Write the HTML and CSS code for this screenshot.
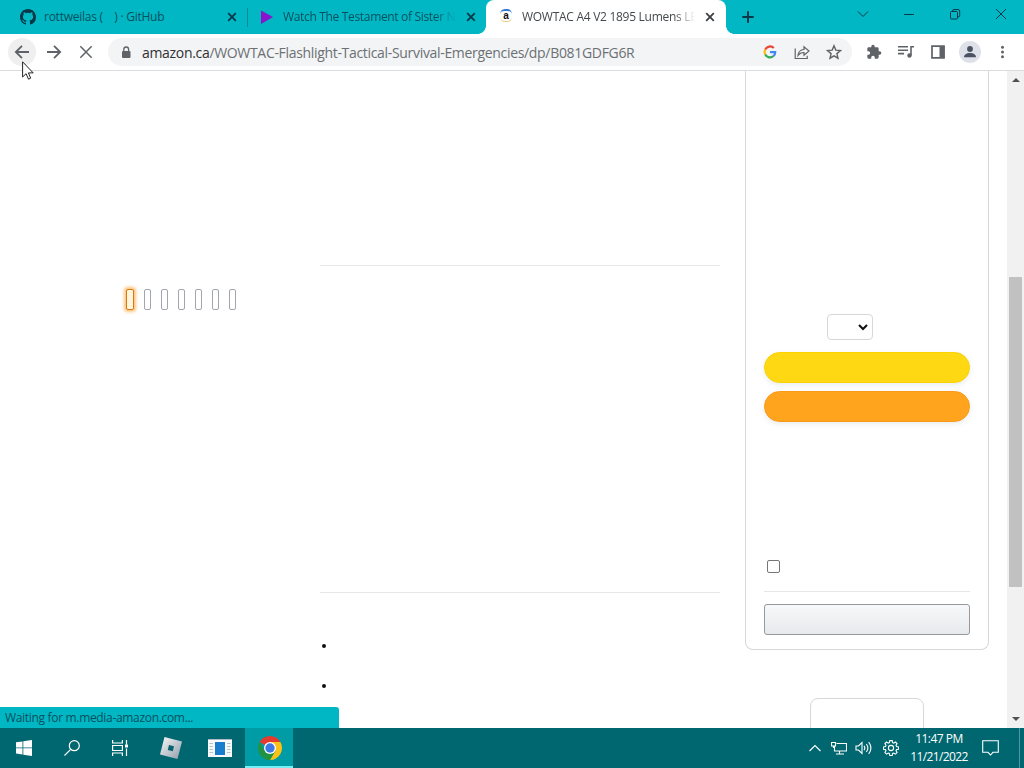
FILE: index.html
```
<!DOCTYPE html>
<html lang="en">
<head>
  <meta charset="UTF-8">
  <title>WOWTAC A4 V2 1895 Lumens LED Flashlight</title>
  <link rel="stylesheet" href="styles.css">
</head>
<body>

<div class="tab-bar">
  <div class="tab first-tab">
    <svg class="favicon" viewBox="0 0 16 16"><path fill="#07384a" d="M8 0C3.58 0 0 3.58 0 8c0 3.54 2.29 6.53 5.47 7.59.4.07.55-.17.55-.38 0-.19-.01-.82-.01-1.49-2.01.37-2.53-.49-2.69-.94-.09-.23-.48-.94-.82-1.13-.28-.15-.68-.52-.01-.53.63-.01 1.08.58 1.23.82.72 1.21 1.87.87 2.33.66.07-.52.28-.87.51-1.07-1.78-.2-3.64-.89-3.64-3.95 0-.87.31-1.59.82-2.15-.08-.2-.36-1.02.08-2.12 0 0 .67-.21 2.2.82a7.6 7.6 0 0 1 4 0c1.53-1.04 2.2-.82 2.2-.82.44 1.1.16 1.92.08 2.12.51.56.82 1.27.82 2.15 0 3.07-1.87 3.75-3.65 3.95.29.25.54.73.54 1.48 0 1.07-.01 1.93-.01 2.2 0 .21.15.46.55.38A8.01 8.01 0 0 0 16 8c0-4.42-3.58-8-8-8z"/></svg>
    <span class="title github-title">rottweilas (&nbsp;&nbsp;&nbsp; ) · GitHub</span>
    <svg class="close" viewBox="0 0 10 10"><path d="M1.2 1.2l7.6 7.6M8.8 1.2L1.2 8.8"/></svg>
  </div>
  <div class="tab second-tab">
    <svg class="favicon" viewBox="0 0 16 16"><path fill="#8a14cc" d="M2 1.5L14 8 2 15z"/></svg>
    <span class="title fade watch-title">Watch The Testament of Sister N</span>
    <svg class="close" viewBox="0 0 10 10"><path d="M1.2 1.2l7.6 7.6M8.8 1.2L1.2 8.8"/></svg>
  </div>
  <div class="tab active">
    <div class="favicon amazon-icon">a</div>
    <span class="title fade wowtac-title">WOWTAC A4 V2 1895 Lumens LE</span>
    <svg class="close" viewBox="0 0 10 10"><path d="M1.2 1.2l7.6 7.6M8.8 1.2L1.2 8.8"/></svg>
  </div>
  <svg class="new-tab" viewBox="0 0 12 12"><path d="M6 .3v11.4M.3 6h11.4"/></svg>
  <div class="window-buttons">
    <svg viewBox="0 0 12 12"><path d="M1 3.5l5 5 5-5"/></svg>
    <svg viewBox="0 0 12 12"><path d="M1 6.5h10"/></svg>
    <svg viewBox="0 0 12 12"><rect x="1.5" y="3.5" width="7" height="7.5" rx="1"/><path d="M3.5 3.2V3a1.6 1.6 0 0 1 1.6-1.5H9A1.7 1.7 0 0 1 10.7 3v4.3A1.6 1.6 0 0 1 9 9"/></svg>
    <svg viewBox="0 0 12 12"><path d="M1 1l10 10M11 1L1 11"/></svg>
  </div>
</div>

<div class="toolbar">
  <div class="nav-button hovered"><svg viewBox="0 0 16 16"><path d="M15 8H2M8 1.8L1.8 8 8 14.2"/></svg></div>
  <div class="nav-button"><svg viewBox="0 0 16 16"><path d="M1 8h13M8 1.8L14.2 8 8 14.2"/></svg></div>
  <div class="nav-button"><svg viewBox="0 0 16 16"><path d="M2.3 2.3l11.4 11.4M13.7 2.3L2.3 13.7" stroke-width="1.5"/></svg></div>
  <div class="omnibox">
    <svg class="lock" viewBox="0 0 10 13"><rect x="1" y="5" width="8.5" height="7" rx="1" fill="#5f6368"/><path d="M2.8 5.5V3.4a2.4 2.4 0 0 1 4.8 0v2.1" fill="none" stroke="#5f6368" stroke-width="1.3"/></svg>
    <span class="url"><b>amazon.ca</b>/WOWTAC-Flashlight-Tactical-Survival-Emergencies/dp/B081GDFG6R</span>
    <svg class="box-icon" viewBox="0 0 16 16" fill="none"><g stroke-width="2.2"><path stroke="#ea4335" d="M3.2 5.5a5.3 5.3 0 0 1 8.6-1.4"/><path stroke="#fbbc05" d="M3.2 5.5a5.3 5.3 0 0 0 0 5"/><path stroke="#34a853" d="M3.2 10.5a5.3 5.3 0 0 0 8.3 1.5"/><path stroke="#4285f4" d="M8 8.2h5.2a5.1 5.1 0 0 1-1.7 3.8"/></g></svg>
    <svg class="box-icon share" viewBox="0 0 16 16"><path d="M1.2 4.5v10h12v-2.7M4 11.5c.3-4 2.4-5.7 6-6V2.8L15 7l-5 4.2V8.5c-2.7 0-4.5.8-6 3z"/></svg>
    <svg class="box-icon" viewBox="0 0 16 16"><path d="M8 1.8l1.8 4.3 4.7.4-3.6 3.1 1.1 4.6L8 11.8l-4 2.4 1.1-4.6-3.6-3.1 4.7-.4z"/></svg>
  </div>
  <div class="extensions">
    <svg viewBox="0 0 24 24"><path fill="#5f6368" d="M20.5 11H19V7c0-1.100-.9-2-2-2h-4V3.500a2.500 2.500 0 0 0-5 0V5H4c-1.100 0-2 .9-2 2v3.800h1.500a2.700 2.700 0 0 1 0 5.400H2V20c0 1.100.9 2 2 2h3.800v-1.500a2.700 2.700 0 0 1 5.400 0V22H17c1.100 0 2-.9 2-2v-4h1.500a2.500 2.500 0 0 0 0-5z"/></svg>
    <svg viewBox="0 0 16 16"><path d="M0 2.8h10M0 6.2h10M0 9.6h6M16 2.8h-3v8.5" fill="none" stroke="#5f6368" stroke-width="1.6"/><circle cx="11.5" cy="11.5" r="2.2" fill="#5f6368"/></svg>
    <svg viewBox="0 0 16 16"><path d="M2 2.2h12v11.6H2z" fill="none" stroke="#5f6368" stroke-width="1.7"/><path d="M9.5 2h5v12h-5z" fill="#5f6368"/></svg>
    <div class="avatar"><svg viewBox="0 0 16 16" fill="#4b5263"><circle cx="8" cy="5" r="2.9"/><path d="M2 13.2c0-5.6 12-5.6 12 0z"/></svg></div>
    <svg viewBox="0 0 16 16" fill="#5f6368"><circle cx="8.5" cy="3.2" r="1.5"/><circle cx="8.5" cy="8" r="1.5"/><circle cx="8.5" cy="12.8" r="1.5"/></svg>
  </div>
</div>

<div class="viewport">
  <div class="product">
    <div class="thumbs">
      <div class="thumb selected"></div>
      <div class="thumb"></div>
      <div class="thumb"></div>
      <div class="thumb"></div>
      <div class="thumb"></div>
      <div class="thumb"></div>
      <div class="thumb"></div>
    </div>
    <div class="details">
      <hr>
      <hr>
      <ul>
        <li></li>
        <li></li>
      </ul>
    </div>
    <div class="side">
      <div class="buy-box">
        <div class="quantity"><svg viewBox="0 0 10 8"><path d="M1 2l4 4 4-4"/></svg></div>
        <div class="add-to-cart"></div>
        <div class="buy-now"></div>
        <div class="checkbox"></div>
        <hr>
        <div class="add-to-list"></div>
      </div>
      <div class="sell-box"></div>
    </div>
  </div>
  <div class="scrollbar">
    <svg viewBox="0 0 8 4"><path d="M0 4l4-4 4 4z"/></svg>
    <div class="scroll-thumb"></div>
    <svg viewBox="0 0 8 4"><path d="M0 0l4 4 4-4z"/></svg>
  </div>
  <div class="status"><span>Waiting for m.media-amazon.com...</span></div>
</div>

<div class="taskbar">
  <div class="task"><svg viewBox="0 0 16 16" fill="#fff"><path d="M0 2.3l6.5-.9v6.1H0zM7.3 1.3L16 0v7.5H7.3zM0 8.3h6.5v6.2L0 13.6zM7.3 8.3H16V16l-8.700-1.300z"/></svg></div>
  <div class="task"><svg viewBox="0 0 16 16" class="line"><circle cx="10.3" cy="5.7" r="5"/><path d="M6.7 9.3L.5 15.5"/></svg></div>
  <div class="task"><svg viewBox="0 0 16 16" class="line"><path d="M.6 0v3h9.8V0M.6 16v-3h9.8v3M.6 5.5h9.8v5H.6zM14.5 0v4.5M14.5 8.5V16"/><path d="M13 4.5h3v3h-3z" fill="#fff" stroke="none"/></svg></div>
  <div class="task">
    <svg class="roblox" viewBox="0 0 24 24"><defs><linearGradient id="silver" x2="1" y2="1"><stop offset="0" stop-color="#fafafa"/><stop offset="1" stop-color="#8f9ba8"/></linearGradient></defs><path fill="url(#silver)" d="M5.5 1L23 5.5 18.5 23 1 18.5z"/><path fill="#07646e" d="M10 9l5 1.2-1.2 5-5-1.2z"/></svg>
  </div>
  <div class="task">
    <svg class="run-app" viewBox="0 0 24 18"><path fill="#f7f9fa" d="M0 0h24v18H0z"/><path fill="#aebdc4" d="M0 0h24v1H0z"/><path fill="#177dcc" d="M7 3h10v13H7z"/><path stroke="#b5c3c7" d="M1.5 4.5H5M1.5 7.5H5M1.5 10.5H5M1.5 13.5H5M19 4.5h3.5M19 7.5h3.5M19 10.5h3.5M19 13.5h3.5"/></svg>
  </div>
  <div class="task running">
    <svg class="chrome" viewBox="0 0 24 24"><path fill="#e33b2e" d="M12 12L1.61 6a12 12 0 0 1 20.78 0z"/><path fill="#fbc116" d="M12 12V6h10.39A12 12 0 0 1 12 24l5.2-9z"/><path fill="#229342" d="M12 12l5.2 3L12 24A12 12 0 0 1 1.61 6L6.8 15z"/><circle cx="12" cy="12" r="6" fill="#fff"/><circle cx="12" cy="12" r="4.7" fill="#3c78e6"/></svg>
  </div>
  <div class="tray">
    <svg class="caret" viewBox="0 0 12 8"><path d="M.5 7L6 1.5 11.5 7"/></svg>
    <svg class="network" viewBox="0 0 16 14"><path d="M5.5 2.5h10V10h-12V5.5M8.5 10v3M5 13h8M.5 1.5h4V5h-4zM2.5 5v2"/></svg>
    <svg class="volume" viewBox="0 0 17 14"><path d="M1 5h2.5L7 1.5v11L3.5 9H1zM9 4.8c1 1.3 1 3.1 0 4.4M11.3 3c1.9 2.4 1.9 5.6 0 8M13.7 1.2c2.7 3.5 2.7 8.1 0 11.6"/></svg>
    <svg class="gear" viewBox="0 0 16 16"><path d="M6.8.6h2.4l.4 2 1.2.5L12.5 2l1.6 1.6-1.1 1.7.5 1.2 2 .4v2.3l-2 .4-.5 1.2 1.1 1.7-1.6 1.6-1.7-1.1-1.2.5-.4 2H6.8l-.4-2-1.2-.5-1.7 1.1-1.6-1.6L3 10.8l-.5-1.200-2-.4V6.900l2-.4L3 5.300 1.900 3.600 3.500 2l1.700 1.100 1.200-.5z"/><circle cx="8" cy="8" r="2.6"/></svg>
    <div class="clock"><span class="time">11:47 PM</span><span class="date">11/21/2022</span></div>
    <svg class="notes" viewBox="0 0 17 16"><path d="M.7.7h15.6v11.6H11L8.5 15 6 12.3H.7z"/></svg>
    <div class="show-desktop"></div>
  </div>
</div>

<svg class="cursor" viewBox="0 0 12 19"><path d="M.6.8V16l3.5-3.3 2.4 5.5 2.2-1-2.300-5.300h4.800z"/></svg>

</body>
</html>
```
FILE: styles.css
```
* { box-sizing: border-box; }
body {
  margin: 0;
  width: 1024px;
  height: 768px;
  overflow: hidden;
  background: #fff;
  font-family: "Open Sans", "Noto Sans", sans-serif;
  font-size: 12px;
}
svg {
  display: block;
  flex-shrink: 0;
}
hr {
  margin: 0;
  border: 0;
  border-top: 1px solid #e7e7e7;
}

/* tabs */
.tab-bar {
  display: flex;
  height: 34px;
  background: #00b7c3;
}
.tab {
  display: flex;
  align-items: center;
  height: 34px;
  color: #07505f;
}
.first-tab {
  position: relative;
  width: 248px;
  padding: 0 11px 0 20px;
}
.first-tab::after {
  content: "";
  position: absolute;
  right: 0;
  top: 8px;
  width: 1px;
  height: 19px;
  background: #078b97;
}
.second-tab {
  width: 238px;
  padding: 0 10px 0 11px;
}
.tab.active {
  position: relative;
  width: 240px;
  padding: 0 11px 0 14px;
  background: #fff;
  border-radius: 8px 8px 0 0;
  color: #45494d;
}
.tab.active::before,
.tab.active::after {
  content: "";
  position: absolute;
  bottom: 0;
  width: 8px;
  height: 8px;
}
.tab.active::before {
  left: -8px;
  background: radial-gradient(circle at 0 0, transparent 7.5px, #fff 8px);
}
.tab.active::after {
  right: -8px;
  background: radial-gradient(circle at 100% 0, transparent 7.5px, #fff 8px);
}
.favicon {
  width: 16px;
  height: 16px;
  margin-right: 8px;
}
.amazon-icon {
  width: 12px;
  height: 13px;
  margin-right: 10px;
  margin-bottom: 3px;
  border-top: 2px solid #3478d4;
  border-bottom: 1px solid #f0c987;
  border-radius: 40%;
  color: #111;
  font: bold 10px/9px "Liberation Sans", sans-serif;
  text-align: center;
}
.title {
  flex: 1;
  min-width: 0;
  margin-right: 10px;
  white-space: nowrap;
  line-height: 18px;
}
.github-title { letter-spacing: -0.25px; }
.watch-title { letter-spacing: -0.33px; }
.wowtac-title { letter-spacing: -0.28px; }
.fade {
  -webkit-mask-image: linear-gradient(to right, #000 88%, transparent);
  mask-image: linear-gradient(to right, #000 88%, transparent);
}
.close {
  width: 10px;
  height: 10px;
  fill: none;
  stroke: #07384a;
  stroke-width: 1.8;
}
.active .close { stroke: #3c4043; }
.new-tab {
  width: 12px;
  height: 12px;
  margin: 11px 0 0 16px;
  stroke: #07384a;
  stroke-width: 2;
}
.window-buttons {
  display: flex;
  gap: 34px;
  margin: 8px 17px 0 auto;
}
.window-buttons svg {
  width: 12px;
  height: 12px;
  fill: none;
  stroke: #07384a;
  stroke-width: 1;
}

/* toolbar */
.toolbar {
  display: flex;
  align-items: center;
  height: 37px;
  padding: 0 0 0 8px;
  border-bottom: 1px solid #dadce0;
  background: #fff;
}
.nav-button {
  display: flex;
  align-items: center;
  justify-content: center;
  width: 28px;
  height: 28px;
  margin-right: 4px;
  border-radius: 50%;
}
.nav-button.hovered { background: #efeff0; }
.nav-button svg {
  width: 16px;
  height: 16px;
  fill: none;
  stroke: #5f6368;
  stroke-width: 1.8;
}
.omnibox {
  display: flex;
  align-items: center;
  width: 744px;
  height: 28px;
  margin-left: 4px;
  padding: 0 10px 0 13px;
  border-radius: 14px;
  background: #f3f4f5;
}
.lock {
  width: 10px;
  height: 13px;
  margin-right: 11px;
}
.url {
  flex: 1;
  color: #6c7074;
  font-size: 14px;
  letter-spacing: -0.32px;
  white-space: nowrap;
}
.url b {
  color: #303134;
  font-weight: normal;
}
.box-icon {
  width: 16px;
  height: 16px;
  margin-left: 16px;
  fill: none;
  stroke: #5f6368;
  stroke-width: 1.4;
}
.share { stroke-width: 1.2; }
.extensions {
  display: flex;
  align-items: center;
  gap: 16px;
  margin-left: 14px;
}
.extensions svg {
  width: 16px;
  height: 16px;
}
.avatar {
  display: flex;
  align-items: center;
  justify-content: center;
  width: 22px;
  height: 22px;
  margin: 0 -3px;
  border-radius: 50%;
  background: #dee1e8;
}

/* page */
.viewport {
  position: relative;
  display: flex;
  height: 657px;
}
.product {
  display: grid;
  grid-template-columns: 194px 400px 269px;
  width: 1007px;
  padding-left: 126px;
  overflow: hidden;
}
.thumbs {
  display: flex;
  gap: 10px;
  padding-top: 218px;
}
.thumb {
  width: 7px;
  height: 21px;
  border: 1px solid #a2a6ac;
  border-radius: 2px;
}
.thumb.selected {
  width: 8px;
  border-color: #d47a15;
  background: #fff4dc;
  box-shadow: 0 0 3px 2px rgba(255, 164, 56, 0.65);
}
.details { padding-top: 194px; }
.details hr + hr { margin-top: 326px; }
.details ul {
  margin: 51px 0 0;
  padding: 0;
  list-style: none;
}
.details li {
  width: 4px;
  height: 4px;
  margin: 0 0 36px 2px;
  border-radius: 50%;
  background: #111;
}
.side {
  width: 244px;
  margin-left: 25px;
}
.buy-box {
  height: 579px;
  padding: 243px 18px 0;
  border: 1px solid #d5d9d9;
  border-top: 0;
  border-radius: 0 0 8px 8px;
}
.quantity {
  display: flex;
  align-items: center;
  justify-content: flex-end;
  width: 46px;
  height: 26px;
  margin-left: 63px;
  padding-right: 4px;
  border: 1px solid #d5d9d9;
  border-radius: 4px;
}
.quantity svg {
  width: 10px;
  height: 8px;
  fill: none;
  stroke: #111;
  stroke-width: 2;
}
.add-to-cart,
.buy-now {
  height: 31px;
  border-radius: 16px;
  box-shadow: 0 2px 5px rgba(213, 217, 217, 0.5);
}
.add-to-cart {
  margin-top: 12px;
  border: 1px solid #fcd200;
  background: #ffd814;
}
.buy-now {
  margin-top: 8px;
  border: 1px solid #fb9a1a;
  background: #ffa41c;
}
.checkbox {
  width: 13px;
  height: 13px;
  margin: 138px 0 18px 3px;
  border: 1px solid #767676;
  border-radius: 2px;
}
.add-to-list {
  height: 31px;
  margin-top: 12px;
  border: 1px solid #959a9f;
  border-radius: 3px;
  background: linear-gradient(#f7f8fa, #e7e9ec);
}
.sell-box {
  width: 114px;
  height: 40px;
  margin: 48px 0 0 65px;
  border: 1px solid #d5d9d9;
  border-radius: 8px;
}
.scrollbar {
  display: flex;
  flex-direction: column;
  align-items: center;
  width: 17px;
  padding: 7px 0;
  background: #f1f1f1;
}
.scrollbar svg {
  width: 8px;
  height: 4px;
  fill: #505050;
}
.scroll-thumb {
  width: 13px;
  height: 310px;
  margin: 195px 0 auto;
  background: #c1c1c1;
}
.status {
  position: absolute;
  left: 0;
  bottom: 0;
  width: 339px;
  height: 21px;
  padding-left: 5px;
  border-radius: 0 3px 0 0;
  background: #00b7c3;
  color: #07505f;
  letter-spacing: -0.32px;
  line-height: 21px;
}

/* taskbar */
.taskbar {
  display: flex;
  height: 40px;
  background: #006770;
}
.task {
  display: flex;
  align-items: center;
  justify-content: center;
  width: 48px;
  height: 40px;
}
.task svg {
  width: 16px;
  height: 16px;
}
.task .line {
  fill: none;
  stroke: #fff;
  stroke-width: 1.2;
}
.task .roblox {
  width: 24px;
  height: 24px;
  margin-left: 6px;
}
.task .run-app {
  width: 24px;
  height: 18px;
  margin-left: 8px;
}
.task .chrome {
  width: 24px;
  height: 24px;
  margin: 2px 0 0 2px;
}
.running {
  margin-left: 5px;
  border-bottom: 2px solid #76f0f4;
  background: #009ca5;
}
.tray {
  display: flex;
  align-items: center;
  margin-left: auto;
}
.tray svg {
  fill: none;
  stroke: #fff;
  stroke-width: 1.1;
}
.caret {
  width: 12px;
  height: 8px;
  margin-right: 10px;
}
.network {
  width: 16px;
  height: 14px;
  margin-right: 8px;
}
.volume {
  width: 17px;
  height: 14px;
  margin-right: 11px;
}
.gear {
  width: 16px;
  height: 16px;
  margin-right: 11px;
}
.clock {
  display: flex;
  flex-direction: column;
  align-items: center;
  width: 58px;
  margin-right: 14px;
  color: #fff;
  line-height: 18px;
  white-space: nowrap;
}
.time { letter-spacing: -0.5px; }
.date { letter-spacing: -0.6px; }
.notes {
  width: 17px;
  height: 16px;
  margin-right: 20px;
}
.show-desktop {
  width: 5px;
  height: 40px;
  border-left: 1px solid #4d979d;
}
.cursor {
  position: absolute;
  left: 22px;
  top: 61px;
  width: 12px;
  height: 19px;
  fill: #fff;
  stroke: #222;
  stroke-width: 1;
}
```
